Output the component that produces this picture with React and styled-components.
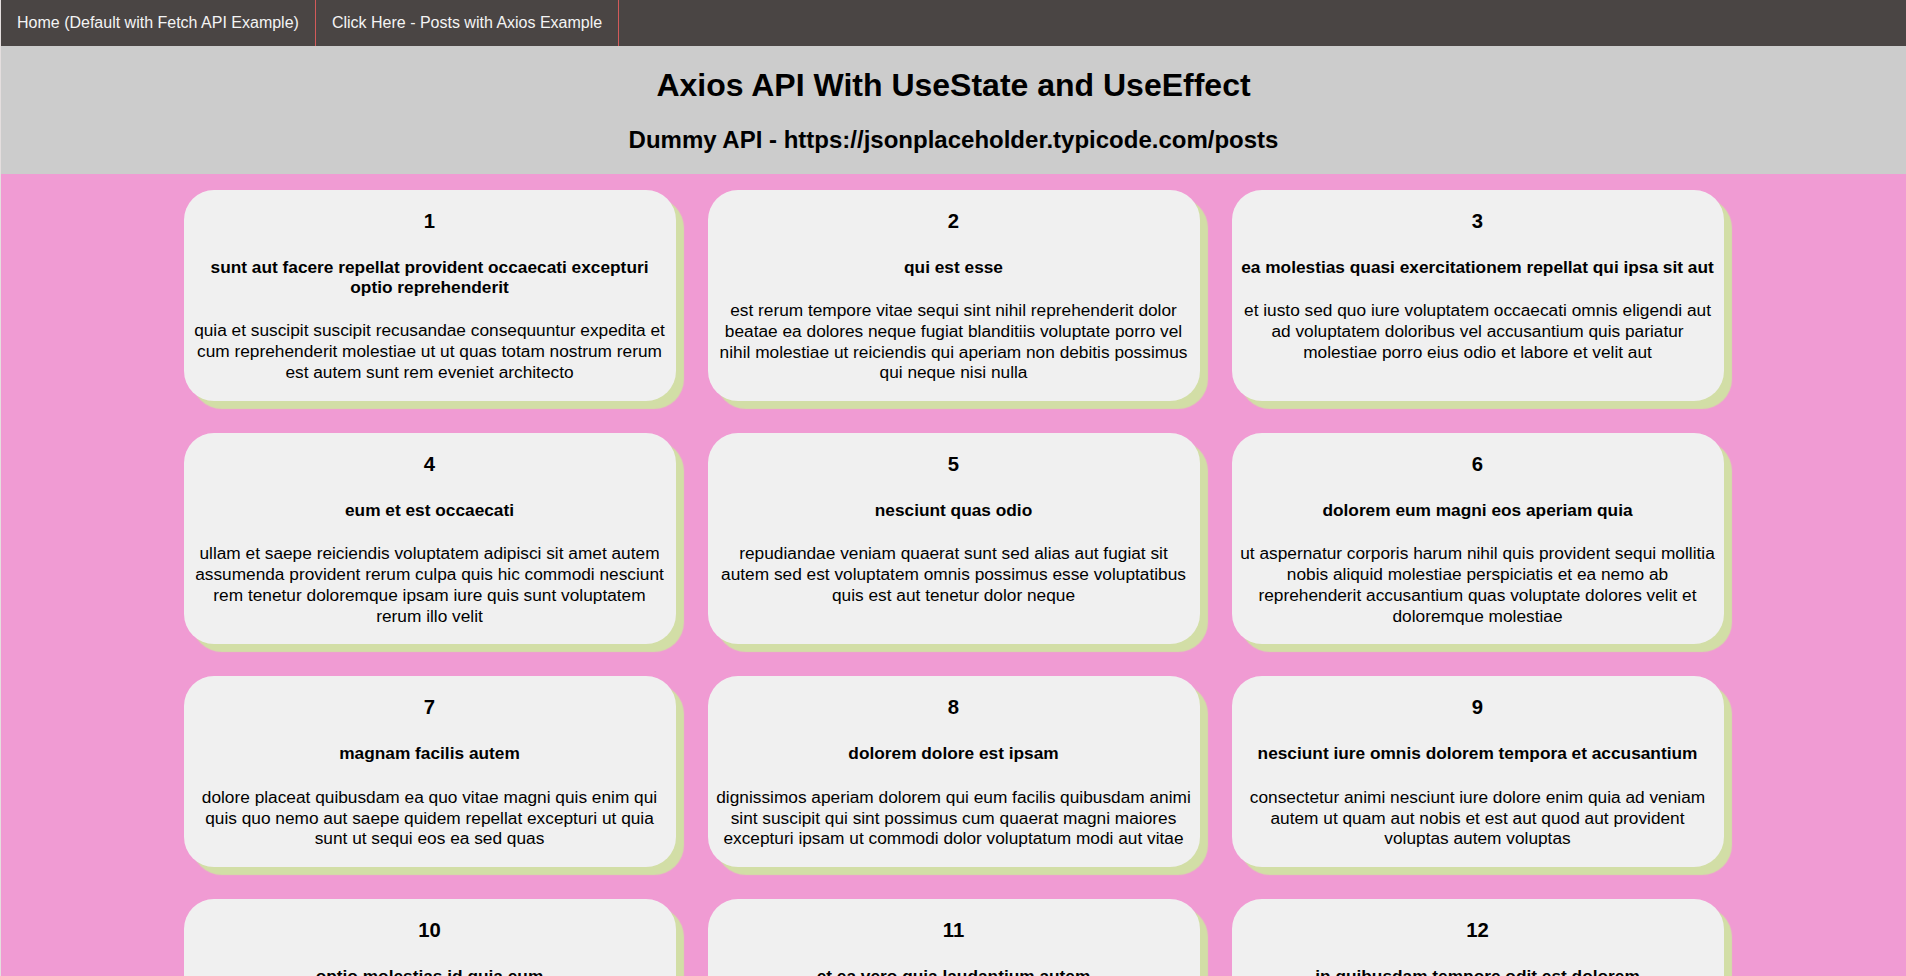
import React from 'react';
import styled, { createGlobalStyle } from 'styled-components';

const GlobalStyle = createGlobalStyle`
  html, body {
    margin: 0;
    padding: 0;
    background: #f09bd3;
    font-family: "Liberation Sans", Arial, sans-serif;
    color: #000;
  }
`;

const posts = [
  { id: 1, title: 'sunt aut facere repellat provident occaecati excepturi optio reprehenderit', body: 'quia et suscipit suscipit recusandae consequuntur expedita et cum reprehenderit molestiae ut ut quas totam nostrum rerum est autem sunt rem eveniet architecto' },
  { id: 2, title: 'qui est esse', body: 'est rerum tempore vitae sequi sint nihil reprehenderit dolor beatae ea dolores neque fugiat blanditiis voluptate porro vel nihil molestiae ut reiciendis qui aperiam non debitis possimus qui neque nisi nulla' },
  { id: 3, title: 'ea molestias quasi exercitationem repellat qui ipsa sit aut', body: 'et iusto sed quo iure voluptatem occaecati omnis eligendi aut ad voluptatem doloribus vel accusantium quis pariatur molestiae porro eius odio et labore et velit aut' },
  { id: 4, title: 'eum et est occaecati', body: 'ullam et saepe reiciendis voluptatem adipisci sit amet autem assumenda provident rerum culpa quis hic commodi nesciunt rem tenetur doloremque ipsam iure quis sunt voluptatem rerum illo velit' },
  { id: 5, title: 'nesciunt quas odio', body: 'repudiandae veniam quaerat sunt sed alias aut fugiat sit autem sed est voluptatem omnis possimus esse voluptatibus quis est aut tenetur dolor neque' },
  { id: 6, title: 'dolorem eum magni eos aperiam quia', body: 'ut aspernatur corporis harum nihil quis provident sequi mollitia nobis aliquid molestiae perspiciatis et ea nemo ab reprehenderit accusantium quas voluptate dolores velit et doloremque molestiae' },
  { id: 7, title: 'magnam facilis autem', body: 'dolore placeat quibusdam ea quo vitae magni quis enim qui quis quo nemo aut saepe quidem repellat excepturi ut quia sunt ut sequi eos ea sed quas' },
  { id: 8, title: 'dolorem dolore est ipsam', body: 'dignissimos aperiam dolorem qui eum facilis quibusdam animi sint suscipit qui sint possimus cum quaerat magni maiores excepturi ipsam ut commodi dolor voluptatum modi aut vitae' },
  { id: 9, title: 'nesciunt iure omnis dolorem tempora et accusantium', body: 'consectetur animi nesciunt iure dolore enim quia ad veniam autem ut quam aut nobis et est aut quod aut provident voluptas autem voluptas' },
  { id: 10, title: 'optio molestias id quia eum', body: 'quo et expedita modi cum officia vel magni doloribus qui repudiandae vero nisi sit quos veniam quod sed accusamus veritatis error' },
  { id: 11, title: 'et ea vero quia laudantium autem', body: 'delectus reiciendis molestiae occaecati non minima eveniet qui voluptatibus accusamus in eum beatae sit vel qui neque voluptates ut commodi qui incidunt ut animi commodi' },
  { id: 12, title: 'in quibusdam tempore odit est dolorem', body: 'itaque id aut magnam praesentium quia et ea odit et ea voluptas et sapiente quia nihil amet occaecati quia id voluptatem incidunt ea est distinctio odio' },
];

const Page = styled.div`
  min-height: 976px;
  border-left: 1px solid #e4dede;
  background: #f09bd3;
`;

const Nav = styled.nav`
  display: flex;
  height: 46px;
  background: #4a4544;
`;

const NavLink = styled.a`
  display: flex;
  align-items: center;
  padding: 0 16px;
  border-right: 1px solid #d35a5a;
  color: #f4f4f4;
  font-size: 16px;
  text-decoration: none;
  cursor: pointer;
`;

const Header = styled.header`
  display: flow-root;
  background: #cccccc;
  text-align: center;

  h1 {
    font-size: 32px;
    margin: 21.4px 0;
  }

  h2 {
    font-size: 24px;
    margin: 19.9px 0;
  }
`;

const Grid = styled.main`
  display: grid;
  grid-template-columns: repeat(3, 492px);
  justify-content: center;
  gap: 32px;
  padding: 16px 0 32px;
`;

const Card = styled.article`
  display: flex;
  flex-direction: column;
  padding: 0 8px;
  background: #f0f0f0;
  border-radius: 30px;
  box-shadow: 8px 8px 1px #d2dea6;
  text-align: center;
`;

const PostId = styled.h3`
  margin: 20px 0 24px;
  font-size: 20.3px;
  line-height: 23px;
`;

const PostTitle = styled.h4`
  margin: 0 0 23.5px;
  font-size: 17.3px;
  line-height: 20px;
`;

const PostBody = styled.p`
  margin: 0 0 18px;
  font-size: 17.3px;
  line-height: 20.7px;
`;

const App = () => {
  return (
    <>
      <GlobalStyle />
      <Page>
        <Nav>
          <NavLink>Home (Default with Fetch API Example)</NavLink>
          <NavLink>Click Here - Posts with Axios Example</NavLink>
        </Nav>
        <Header>
          <h1>Axios API With UseState and UseEffect</h1>
          <h2>Dummy API - https://jsonplaceholder.typicode.com/posts</h2>
        </Header>
        <Grid>
          {posts.map((post) => (
            <Card key={post.id}>
              <PostId>{post.id}</PostId>
              <PostTitle>{post.title}</PostTitle>
              <PostBody>{post.body}</PostBody>
            </Card>
          ))}
        </Grid>
      </Page>
    </>
  );
};

export default App;
